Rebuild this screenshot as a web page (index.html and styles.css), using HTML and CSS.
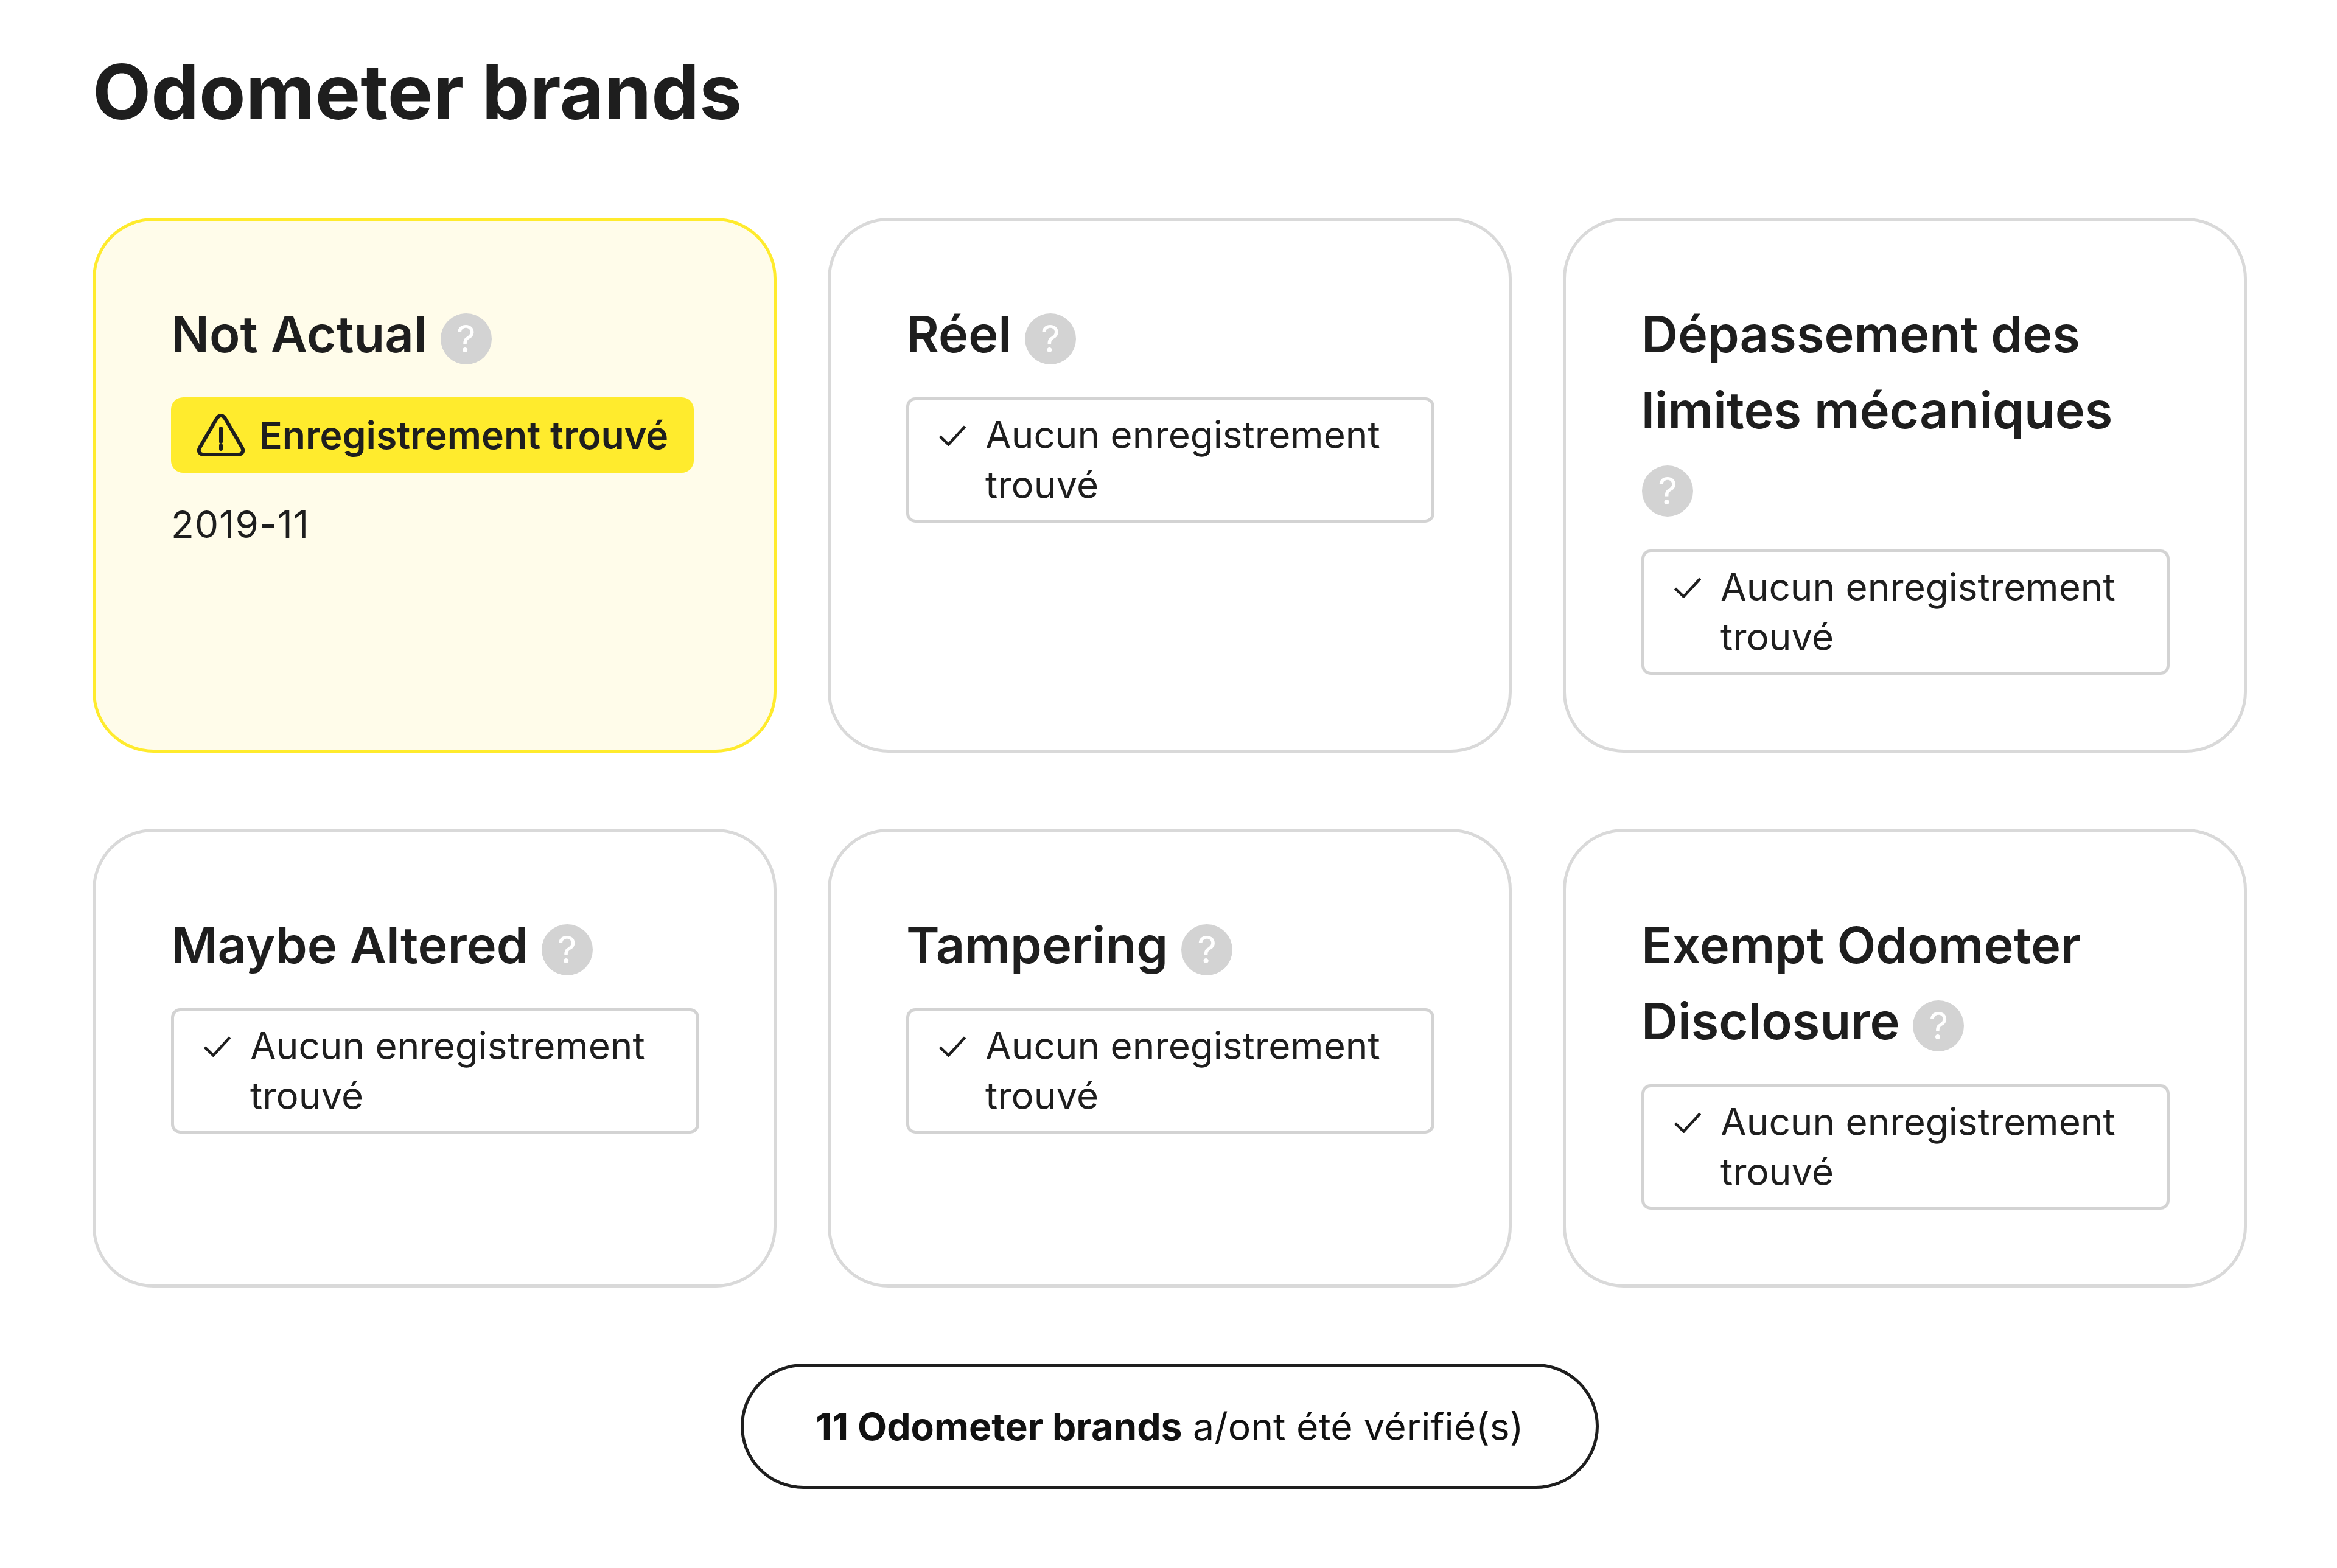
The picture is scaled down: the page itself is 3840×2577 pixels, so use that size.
FILE: index.html
```html
<!DOCTYPE html>
<html lang="fr">
<head>
<meta charset="utf-8">
<title>Odometer brands</title>
<link rel="stylesheet" href="styles.css">
</head>
<body>
<svg class="defs" width="0" height="0" aria-hidden="true">
  <symbol id="check" viewBox="0 0 44 34"><path d="M1.5 18 L15.5 31.5 L42.5 2" fill="none" stroke="currentColor" stroke-width="4.5"/></symbol>
  <symbol id="warn" viewBox="0 0 80 72"><path d="M40 4 C37 4 35 6 33 9 L5 57 C2 63 5 68 12 68 L68 68 C75 68 78 63 75 57 L47 9 C45 6 43 4 40 4 Z M40 25 V47 M40 53 V59" fill="none" stroke="currentColor" stroke-width="6" stroke-linecap="round" stroke-linejoin="round"/></symbol>
</svg>
<main class="page">
  <h1 class="title">Odometer brands</h1>
  <div class="grid">
    <section class="card card-alert">
      <h2 class="card-title">Not Actual <span class="help">?</span></h2>
      <div class="found"><svg class="warn-icon"><use href="#warn"/></svg>Enregistrement trouvé</div>
      <p class="date">2019-11</p>
    </section>
    <section class="card">
      <h2 class="card-title">Réel <span class="help">?</span></h2>
      <div class="none"><svg class="check-icon"><use href="#check"/></svg><span>Aucun enregistrement trouvé</span></div>
    </section>
    <section class="card">
      <h2 class="card-title">Dépassement des limites mécaniques <span class="help">?</span></h2>
      <div class="none"><svg class="check-icon"><use href="#check"/></svg><span>Aucun enregistrement trouvé</span></div>
    </section>
    <section class="card">
      <h2 class="card-title">Maybe Altered <span class="help">?</span></h2>
      <div class="none"><svg class="check-icon"><use href="#check"/></svg><span>Aucun enregistrement trouvé</span></div>
    </section>
    <section class="card">
      <h2 class="card-title">Tampering <span class="help">?</span></h2>
      <div class="none"><svg class="check-icon"><use href="#check"/></svg><span>Aucun enregistrement trouvé</span></div>
    </section>
    <section class="card">
      <h2 class="card-title">Exempt Odometer Disclosure <span class="help">?</span></h2>
      <div class="none"><svg class="check-icon"><use href="#check"/></svg><span>Aucun enregistrement trouvé</span></div>
    </section>
  </div>
  <div class="summary-row"><div class="summary"><strong>11 Odometer brands</strong> a/ont été vérifié(s)</div></div>
</main>
</body>
</html>
```
FILE: styles.css
```css
* { box-sizing: border-box; }
html, body { margin: 0; background: #fff; }
body { font-family: Inter, "Liberation Sans", sans-serif; color: #1e1e1e; }
.defs { position: absolute; }
.page { padding: 69px 148px 0 152px; }
.title { margin: 0 0 126px; font-size: 125px; line-height: 163px; font-weight: 700; }
.grid { display: grid; grid-template-columns: repeat(3, 1fr); column-gap: 84px; row-gap: 125px; }
.card { border: 5px solid #d9d9d9; border-radius: 100px; padding: 124px 122px 123px 124px; background: #fff; }
.card-alert { background: #fffcea; border-color: #ffeb2d; }
.card-title { margin: 0 0 41px; font-size: 83px; line-height: 125px; font-weight: 600; }
.help { display: inline-flex; align-items: center; justify-content: center; width: 84px; height: 84px; border-radius: 50%; background: #d3d3d3; color: #fff; font-size: 62px; font-weight: 400; line-height: 84px; vertical-align: 0; margin-left: 1px; }
.found { display: flex; align-items: center; width: fit-content; height: 124px; padding: 0 42px; background: #ffeb2d; border-radius: 20px; font-size: 62.5px; font-weight: 600; white-space: nowrap; }
.warn-icon { width: 80px; height: 72px; margin-right: 23px; flex: none; }
.date { margin: 44px 0 0; font-size: 62px; line-height: 82px; letter-spacing: 1.1px; }
.none { display: flex; border: 5px solid #d3d3d3; border-radius: 15px; padding: 16px 40px 16px 49px; font-size: 62px; line-height: 82px; }
.check-icon { width: 44px; height: 34px; margin: 25px 32px 0 0; flex: none; }
.summary-row { display: flex; justify-content: center; margin-top: 125px; }
.summary { display: flex; align-items: center; justify-content: center; gap: 0.28em; width: 1410px; height: 206px; border: 5px solid #1e1e1e; border-radius: 103px; font-size: 62.5px; color: #111; }
.summary strong { font-weight: 650; }
```
